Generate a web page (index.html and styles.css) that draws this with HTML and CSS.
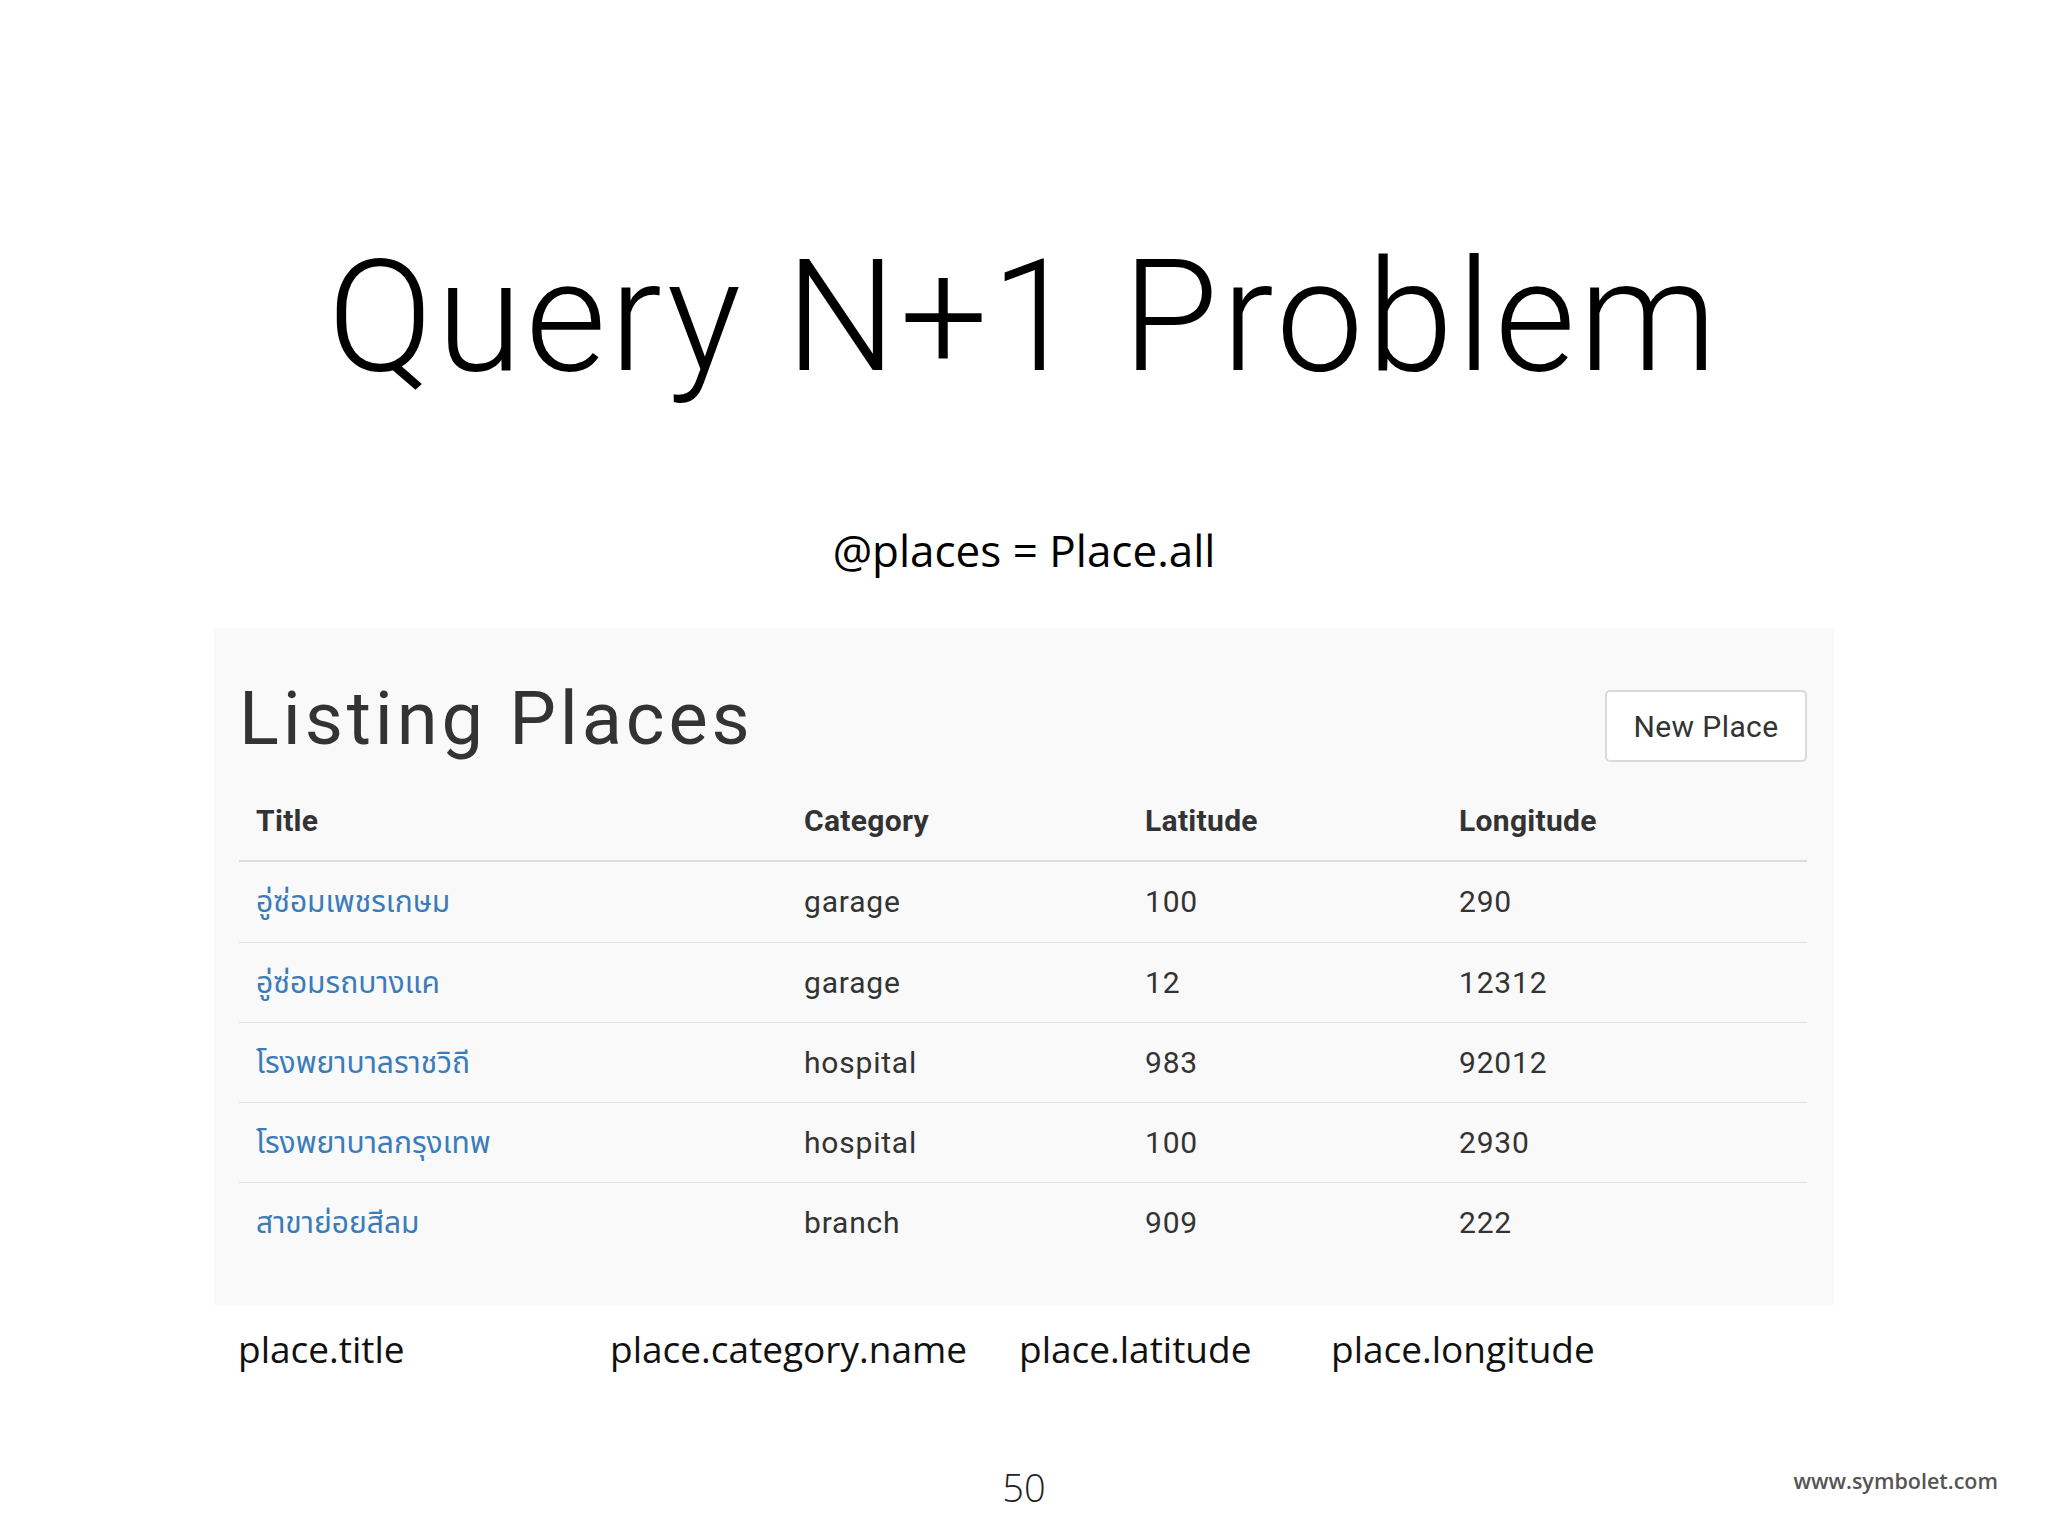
FILE: index.html
```html
<!DOCTYPE html>
<html lang="en">
<head>
<meta charset="utf-8">
<title>Query N+1 Problem</title>
<link rel="stylesheet" href="styles.css">
</head>
<body>
<div class="slide">
  <h1 class="slide-title">Query N+1 Problem</h1>
  <p class="code-line">@places = Place.all</p>
  <section class="panel">
    <div class="panel-head">
      <h2 class="panel-title">Listing Places</h2>
      <a class="btn">New Place</a>
    </div>
    <table class="places">
      <thead>
        <tr>
          <th class="c-title">Title</th>
          <th class="c-cat">Category</th>
          <th class="c-lat">Latitude</th>
          <th class="c-lng">Longitude</th>
        </tr>
      </thead>
      <tbody>
        <tr><td><a class="link">อู่ซ่อมเพชรเกษม</a></td><td>garage</td><td>100</td><td>290</td></tr>
        <tr><td><a class="link">อู่ซ่อมรถบางแค</a></td><td>garage</td><td>12</td><td>12312</td></tr>
        <tr><td><a class="link">โรงพยาบาลราชวิถี</a></td><td>hospital</td><td>983</td><td>92012</td></tr>
        <tr><td><a class="link">โรงพยาบาลกรุงเทพ</a></td><td>hospital</td><td>100</td><td>2930</td></tr>
        <tr><td><a class="link">สาขาย่อยสีลม</a></td><td>branch</td><td>909</td><td>222</td></tr>
      </tbody>
    </table>
  </section>
  <div class="labels">
    <span class="lbl l1">place.title</span>
    <span class="lbl l2">place.category.name</span>
    <span class="lbl l3">place.latitude</span>
    <span class="lbl l4">place.longitude</span>
  </div>
  <footer class="foot">
    <span></span>
    <span class="page-no">50</span>
    <span class="site">www.symbolet.com</span>
  </footer>
</div>
</body>
</html>
```

FILE: styles.css
```css
html, body {
  margin: 0;
  padding: 0;
  background: #ffffff;
}

.slide {
  width: 2048px;
  height: 1536px;
  display: flex;
  flex-direction: column;
  align-items: stretch;
  box-sizing: border-box;
  padding-top: 239px;
  overflow: hidden;
}

.slide-title {
  margin: 0;
  font-family: Roboto, "Liberation Sans", sans-serif;
  font-weight: 300;
  font-size: 156px;
  line-height: 156px;
  letter-spacing: 3.3px;
  color: #000;
  text-align: center;
}

.code-line {
  margin: 125px 0 0 0;
  font-family: "Open Sans", "Noto Sans", sans-serif;
  font-size: 44px;
  line-height: 60px;
  color: #000;
  text-align: center;
}

.panel {
  margin: 48px 0 0 214px;
  width: 1620px;
  height: 677px;
  box-sizing: border-box;
  padding: 51px 27px 43px 25px;
  background: #f9f9fa;
}

.panel-head {
  display: flex;
  justify-content: space-between;
  align-items: flex-start;
}

.panel-title {
  margin: 0;
  font-family: Roboto, "Liberation Sans", sans-serif;
  font-weight: 400;
  font-size: 74px;
  line-height: 80px;
  letter-spacing: 3.9px;
  color: #333;
}

.btn {
  margin-top: 11px;
  width: 202px;
  height: 72px;
  box-sizing: border-box;
  display: flex;
  align-items: center;
  justify-content: center;
  background: #fff;
  border: 2px solid #dadada;
  border-radius: 5px;
  font-family: Roboto, "Liberation Sans", sans-serif;
  font-size: 30px;
  color: #333;
  letter-spacing: 0.4px;
}

.places {
  margin-top: 19px;
  width: 1568px;
  border-collapse: separate;
  border-spacing: 0;
  table-layout: fixed;
  font-family: Roboto, "Liberation Sans", "Noto Sans Thai", "Noto Sans", sans-serif;
  font-size: 30px;
  color: #333;
}

.places th,
.places td {
  padding: 0 0 0 17px;
  text-align: left;
  white-space: nowrap;
}

.places th {
  font-weight: 700;
  line-height: 79px;
  letter-spacing: 0.3px;
  border-bottom: 2px solid #dddddd;
}

.places td {
  line-height: 79px;
  letter-spacing: 0.8px;
  border-top: 1px solid #e2e2e2;
}

.places tbody tr:first-child td {
  line-height: 80px;
  border-top: 0;
}

.c-title { width: 531px; }
.c-cat { width: 324px; }
.c-lat { width: 297px; }
.c-lng { width: 348px; }

.link {
  color: #3b7cb8;
  text-decoration: none;
  letter-spacing: 0;
}

.labels {
  margin-top: 19px;
  padding-left: 238px;
  display: flex;
  font-family: "Open Sans", "Noto Sans", sans-serif;
  font-size: 37px;
  line-height: 50px;
  color: #111;
}

.lbl { display: block; }
.l1 { width: 372px; }
.l2 { width: 409px; }
.l3 { width: 312px; }

.foot {
  margin-top: 88px;
  display: grid;
  grid-template-columns: 1fr auto 1fr;
  padding-right: 50px;
  padding-left: 50px;
}

.page-no {
  font-family: "Open Sans", "Noto Sans", sans-serif;
  font-weight: 300;
  font-size: 38px;
  line-height: 50px;
  color: #222;
}

.site {
  justify-self: end;
  margin-top: 4px;
  font-family: "Open Sans", "Noto Sans", sans-serif;
  font-weight: 600;
  font-size: 21.5px;
  line-height: 30px;
  color: #555;
}
```
